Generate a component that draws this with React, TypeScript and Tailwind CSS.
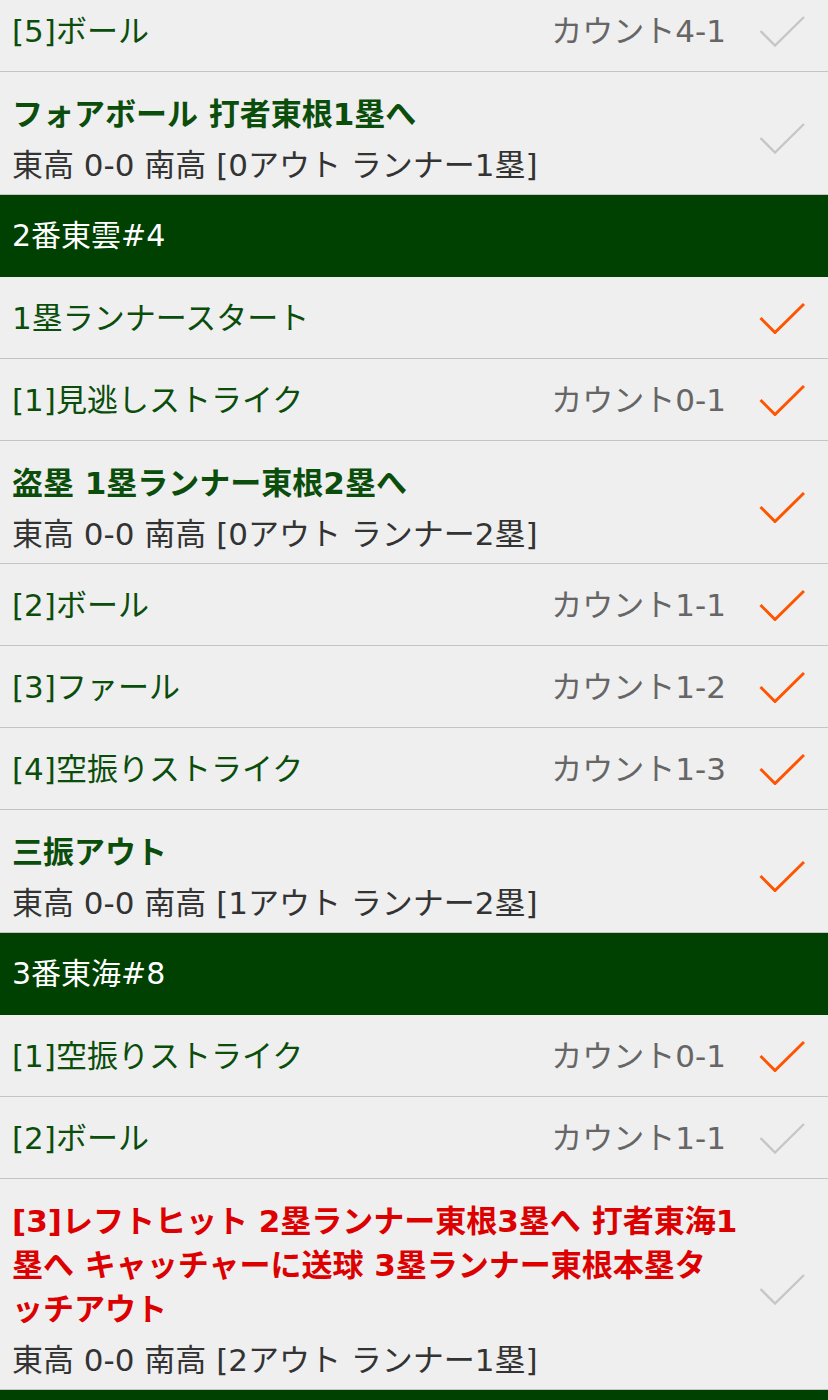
import React from "react";

type Item =
  | { kind: "header"; text: string }
  | { kind: "row"; text: string; count?: string; done: boolean }
  | { kind: "play"; text: string; sub: string; done: boolean; red?: boolean };

const items: Item[] = [
  { kind: "row", text: "[5]ボール", count: "カウント4-1", done: false },
  { kind: "play", text: "フォアボール 打者東根1塁へ", sub: "東高 0-0 南高 [0アウト ランナー1塁]", done: false },
  { kind: "header", text: "2番東雲#4" },
  { kind: "row", text: "1塁ランナースタート", done: true },
  { kind: "row", text: "[1]見逃しストライク", count: "カウント0-1", done: true },
  { kind: "play", text: "盗塁 1塁ランナー東根2塁へ", sub: "東高 0-0 南高 [0アウト ランナー2塁]", done: true },
  { kind: "row", text: "[2]ボール", count: "カウント1-1", done: true },
  { kind: "row", text: "[3]ファール", count: "カウント1-2", done: true },
  { kind: "row", text: "[4]空振りストライク", count: "カウント1-3", done: true },
  { kind: "play", text: "三振アウト", sub: "東高 0-0 南高 [1アウト ランナー2塁]", done: true },
  { kind: "header", text: "3番東海#8" },
  { kind: "row", text: "[1]空振りストライク", count: "カウント0-1", done: true },
  { kind: "row", text: "[2]ボール", count: "カウント1-1", done: false },
  {
    kind: "play",
    text: "[3]レフトヒット 2塁ランナー東根3塁へ 打者東海1\n塁へ キャッチャーに送球 3塁ランナー東根本塁タ\nッチアウト",
    sub: "東高 0-0 南高 [2アウト ランナー1塁]",
    done: false,
    red: true,
  },
  { kind: "header", text: "" },
];

function Check({ done }: { done: boolean }) {
  return (
    <svg width="46" height="32" viewBox="0 0 46 32" className="shrink-0">
      <polyline
        points="1.5,16 16,30.5 45,2"
        fill="none"
        stroke={done ? "#ff5400" : "#c6c6c6"}
        strokeWidth={done ? 3 : 2.4}
        strokeLinecap="butt"
        strokeLinejoin="miter"
      />
    </svg>
  );
}

export default function App() {
  return (
    <div
      className="w-[828px] h-[1400px] overflow-hidden bg-[#efefef]"
      style={{ fontFamily: '"DejaVu Sans", "Noto Sans CJK JP", sans-serif' }}
    >
      <div className="-mt-[10px]">
        {items.map((it, i) => {
          if (it.kind === "header") {
            return (
              <div
                key={i}
                className="h-[82px] bg-[#004000] text-white text-[30px] leading-[36px] pl-[12px] flex items-center"
              >
                {it.text}
              </div>
            );
          }
          if (it.kind === "row") {
            return (
              <div
                key={i}
                className="h-[82px] border-b border-[#c4c4c4] flex items-center pl-[12px] pr-[23px]"
              >
                <div className="flex-1 text-[31px] leading-[36px] text-[#0b4d0b]">{it.text}</div>
                {it.count && (
                  <div className="text-[31px] leading-[36px] text-[#666666] mr-[33px]">{it.count}</div>
                )}
                <Check done={it.done} />
              </div>
            );
          }
          return (
            <div
              key={i}
              className="border-b border-[#c4c4c4] flex items-center pl-[12px] pr-[23px] pt-[20px] pb-[11px]"
            >
              <div className="flex-1 pr-[4px]">
                <div
                  className={
                    "text-[31px] leading-[44px] font-bold whitespace-pre-line " +
                    (it.red ? "text-[#dc0000]" : "text-[#0b4d0b]")
                  }
                >
                  {it.text}
                </div>
                <div className="text-[31px] leading-[36px] text-[#333333] mt-[11px]">{it.sub}</div>
              </div>
              <Check done={it.done} />
            </div>
          );
        })}
      </div>
    </div>
  );
}
